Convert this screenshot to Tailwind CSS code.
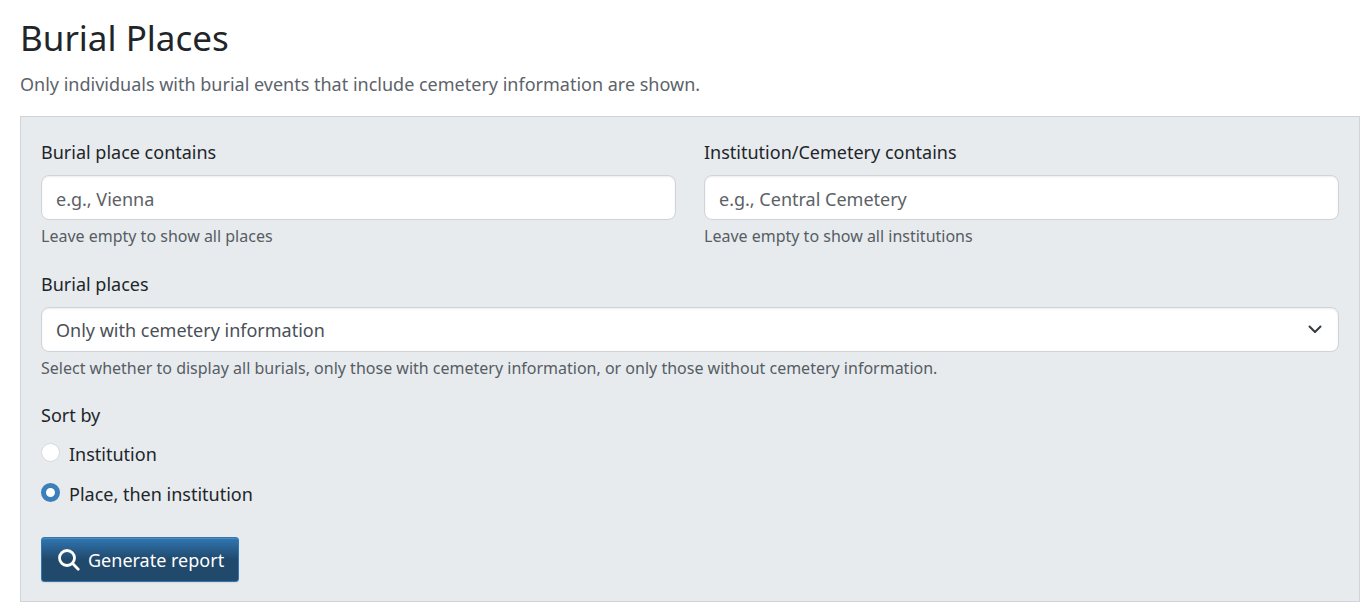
<!DOCTYPE html>
<html lang="en">
<head>
<meta charset="utf-8">
<meta name="viewport" content="width=device-width, initial-scale=1">
<title>Burial Places</title>
<script src="https://cdn.jsdelivr.net/npm/@tailwindcss/browser@4"></script>
</head>
<body class="bg-white font-['Segoe_UI','Noto_Sans',sans-serif] text-lg leading-7 text-[#212529]">
<main class="pt-[13px] pr-[11px] pb-3 pl-5">
  <h1 class="text-[35px] leading-[50px]">Burial Places</h1>
  <p class="mt-[7px] text-[#5c636a]">Only individuals with burial events that include cemetery information are shown.</p>

  <form class="mt-[18px] border border-[#ced4da] bg-[#e7ebee] px-5 pt-[21px] pb-[19px]">
    <div class="grid grid-cols-2 gap-x-7">
      <div>
        <label for="place" class="block">Burial place contains</label>
        <input id="place" type="text" placeholder="e.g., Vienna" class="mt-[9px] block h-[45px] w-full rounded-lg border border-[#ced4da] bg-white px-[14px] pt-[2px] shadow-[inset_0_1px_2px_rgba(0,0,0,0.075)] placeholder:text-[#5c6167]">
        <p class="mt-1 text-base leading-6 text-[#565d64]">Leave empty to show all places</p>
      </div>
      <div>
        <label for="institution" class="block">Institution/Cemetery contains</label>
        <input id="institution" type="text" placeholder="e.g., Central Cemetery" class="mt-[9px] block h-[45px] w-full rounded-lg border border-[#ced4da] bg-white px-[14px] pt-[2px] shadow-[inset_0_1px_2px_rgba(0,0,0,0.075)] placeholder:text-[#5c6167]">
        <p class="mt-1 text-base leading-6 text-[#565d64]">Leave empty to show all institutions</p>
      </div>
    </div>

    <div class="mt-[22px]">
      <label for="filter" class="block">Burial places</label>
      <div class="relative mt-[9px]">
        <select id="filter" class="block h-[45px] w-full appearance-none rounded-lg border border-[#ced4da] bg-white px-[14px] text-[#495057] shadow-[inset_0_1px_2px_rgba(0,0,0,0.075)]">
          <option>All burials</option>
          <option selected>Only with cemetery information</option>
          <option>Only without cemetery information</option>
        </select>
        <svg class="pointer-events-none absolute top-[14px] right-4 size-4" viewBox="0 0 16 16" fill="none" stroke="#343a40" stroke-width="2" stroke-linecap="round" stroke-linejoin="round" aria-hidden="true"><path d="m2.5 5.5 5.5 5.5 5.5-5.5"/></svg>
      </div>
      <p class="mt-1 text-base leading-6 text-[#565d64]">Select whether to display all burials, only those with cemetery information, or only those without cemetery information.</p>
    </div>

    <fieldset class="mt-[21px]">
      <legend>Sort by</legend>
      <div class="mt-[11px] flex flex-col gap-3">
        <label class="flex items-start gap-[9px]">
          <input type="radio" name="sort" class="mt-[3px] size-[19px] appearance-none rounded-full border border-[#d6dade] bg-white checked:border-[5px] checked:border-[#3b80bb]">
          Institution
        </label>
        <label class="flex items-start gap-[9px]">
          <input type="radio" name="sort" checked class="mt-[3px] size-[19px] appearance-none rounded-full border border-[#d6dade] bg-white checked:border-[5px] checked:border-[#3b80bb]">
          Place, then institution
        </label>
      </div>
    </fieldset>

    <button type="submit" class="mt-[29px] flex h-[45px] items-center gap-2 rounded-[3px] border border-[#3077b3] bg-linear-to-b from-[#3077b3] to-[#20496c] to-50% px-[14px] pl-4 text-white shadow-[inset_0_1px_0_rgba(255,255,255,0.15),0_1px_1px_rgba(0,0,0,0.075)]">
      <svg class="size-[22px]" viewBox="0 0 22 22" fill="none" stroke="currentColor" stroke-width="2.8" stroke-linecap="round" aria-hidden="true"><circle cx="9" cy="9" r="7.5"/><path d="m14.6 14.6 5.6 5.6"/></svg>
      Generate report
    </button>
  </form>
</main>
</body>
</html>
